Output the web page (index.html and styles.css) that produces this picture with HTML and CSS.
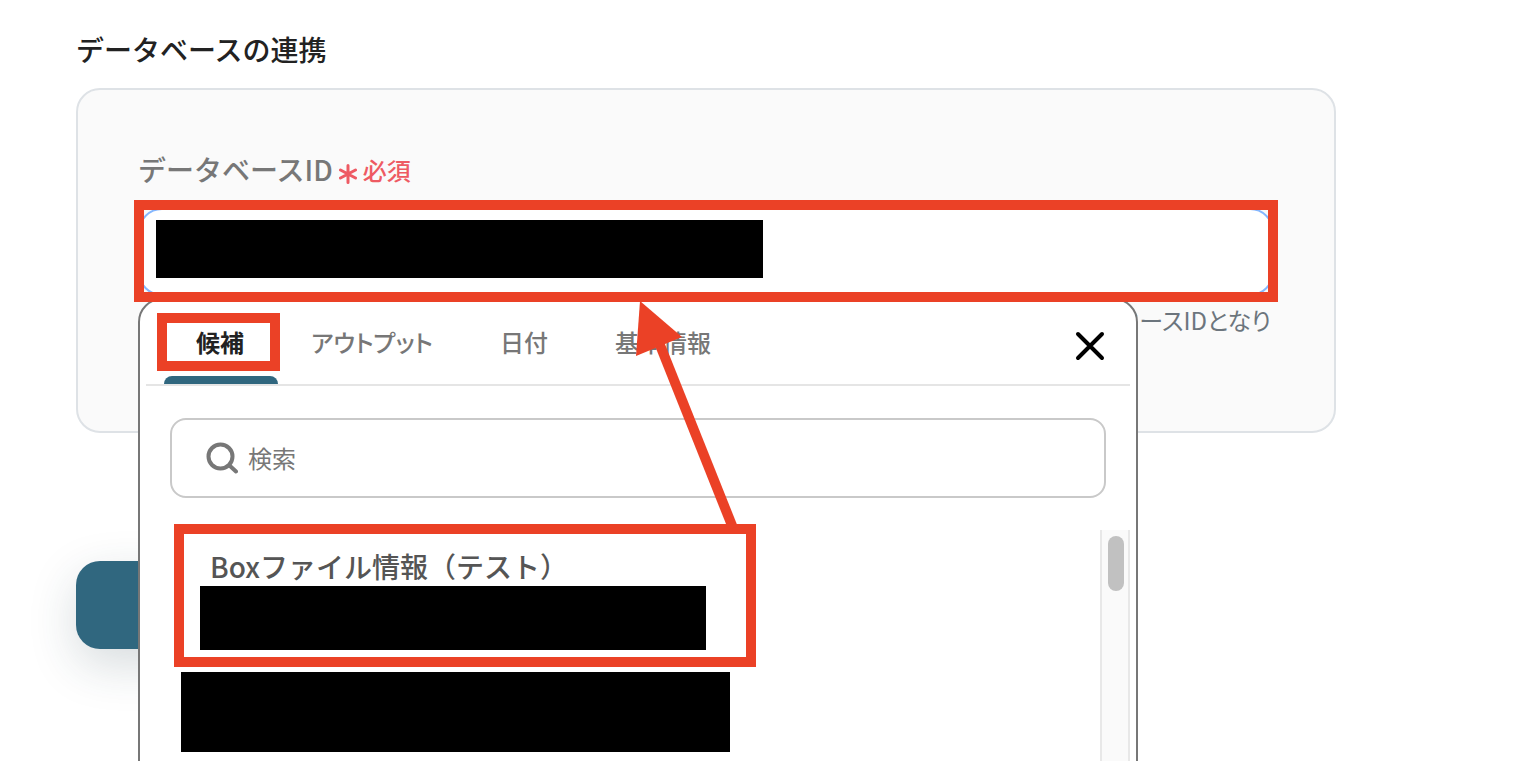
FILE: index.html
```html
<!DOCTYPE html>
<html lang="ja">
<head>
<meta charset="utf-8">
<meta name="viewport" content="width=device-width, initial-scale=1">
<title>データベースの連携</title>
<link rel="stylesheet" href="styles.css">
</head>
<body>
<main class="page">
  <h1 class="page-title">データベースの連携</h1>
  <section class="card">
    <label class="label" for="database-id">データベースID
      <span class="required">
        <svg class="required-mark" viewBox="0 0 18 20" aria-hidden="true"><path d="M9 1.500v17M1.500 6l15 8M16.500 6l-15 8"/></svg>必須
      </span>
    </label>
    <div class="field">
      <input class="text-input" id="database-id" type="text">
      <span class="redaction redaction-value"></span>
      <span class="frame frame-field"></span>

      <div class="popover">
        <div class="tabs">
          <button class="tab tab-active" type="button">候補<span class="frame frame-tab"></span></button>
          <button class="tab" type="button">アウトプット</button>
          <button class="tab" type="button">日付</button>
          <button class="tab" type="button">基本情報</button>
          <button class="close" type="button" aria-label="閉じる">
            <svg viewBox="0 0 32 32" aria-hidden="true"><path d="M4 4l24 24M28 4L4 28"/></svg>
          </button>
        </div>
        <div class="search">
          <svg class="search-icon" viewBox="0 0 32 32" aria-hidden="true"><circle cx="14.500" cy="14.500" r="12"/><path d="M23.500 23.500l6.500 6"/></svg>
          <input class="search-input" type="search" placeholder="検索" aria-label="検索">
        </div>
        <div class="results">
          <ul class="items">
            <li class="item item-picked">
              <span class="item-name">Boxファイル情報（テスト）</span>
              <span class="redaction redaction-first"></span>
              <span class="frame frame-item"></span>
            </li>
            <li class="item"><span class="redaction redaction-second"></span></li>
          </ul>
          <div class="track"><div class="thumb"></div></div>
        </div>
        <svg class="arrow" viewBox="0 0 120 230" aria-hidden="true">
          <path class="arrow-shaft" d="M37 40L112 228"/>
          <path class="arrow-head" d="M19 1L61 37L15 56Z"/>
        </svg>
      </div>
    </div>
    <p class="helper">データベースIDとなり</p>
  </section>
  <button class="submit" type="button" aria-label="送信"></button>
</main>
</body>
</html>
```

FILE: styles.css
```css
* {
  box-sizing: border-box;
}

body {
  margin: 0;
  height: 100vh;
  overflow: hidden;
  background: #fff;
  color: #222;
  font-family: "Noto Sans CJK JP", sans-serif;
}

button,
input {
  font: inherit;
}

.page {
  max-width: 1412px;
  margin-right: 126px;
  padding: 28px 76px 0;
}

.page-title {
  margin: 0 0 18px;
  font-size: 28px;
  font-weight: 500;
  line-height: 42px;
}

.card {
  padding: 58px 60px 60px;
  border: 2px solid #dee2e6;
  border-radius: 24px;
  background: #fafafa;
}

.label {
  display: flex;
  align-items: center;
  gap: 6px;
  margin-bottom: 18px;
  color: #777;
  font-size: 28px;
  font-weight: 500;
  line-height: 42px;
}

.required {
  display: flex;
  align-items: center;
  gap: 6px;
  padding-top: 2px;
  color: #ee5a63;
  font-size: 24px;
  line-height: 40px;
}

.required-mark {
  width: 18px;
  height: 20px;
  margin-top: 8px;
  fill: none;
  stroke: currentColor;
  stroke-width: 3;
  stroke-linecap: round;
}

.field {
  position: relative;
}

.text-input {
  display: block;
  width: 100%;
  height: 88px;
  padding: 0 24px;
  border: 2px solid #86b7fe;
  border-radius: 24px;
  background: #fff;
}

.redaction {
  display: block;
  background: #000;
}

.redaction-value {
  position: absolute;
  top: 12px;
  left: 18px;
  width: 607px;
  height: 58px;
}

.frame {
  position: absolute;
  border: 10px solid #eb4126;
  pointer-events: none;
}

.frame-field {
  inset: -8px -4px -6px;
  z-index: 3;
}

.helper {
  min-height: 68px;
  margin: 7px 0 0;
  padding-right: 3px;
  color: #6c757d;
  font-size: 24px;
  line-height: 34px;
  text-align: right;
  font-feature-settings: "palt";
}

.popover {
  position: absolute;
  top: 90px;
  left: 0;
  z-index: 2;
  width: 1000px;
  max-width: 100%;
  padding: 0 6px;
  border: 2px solid #777;
  border-radius: 24px;
  background: #fff;
}

.tabs {
  display: flex;
  gap: 3px;
  height: 86px;
  padding: 0 24px 0 18px;
  border-bottom: 2px solid #e5e5e5;
}

.tab {
  position: relative;
  padding: 0 32px 2px;
  border: 0;
  background: none;
  color: #777;
  font-size: 24px;
  font-weight: 500;
  font-feature-settings: "palt";
}

.tab-active {
  color: #222;
  font-weight: 700;
}

.tab-active::after {
  content: "";
  position: absolute;
  right: -2px;
  bottom: 0;
  left: 0;
  height: 8px;
  border-radius: 8px 8px 0 0;
  background: #30677f;
}

.frame-tab {
  inset: 13px -4px 13px -7px;
}

.close {
  align-self: center;
  width: 32px;
  height: 32px;
  margin: 8px 0 0 auto;
  padding: 0;
  border: 0;
  background: none;
}

.close svg {
  display: block;
  fill: none;
  stroke: #000;
  stroke-width: 4;
  stroke-linecap: round;
}

.search {
  display: flex;
  align-items: center;
  gap: 10px;
  height: 80px;
  margin: 32px 24px;
  padding: 0 34px;
  border: 2px solid #c9c9c9;
  border-radius: 16px;
}

.search-icon {
  width: 32px;
  height: 32px;
  fill: none;
  stroke: #777;
  stroke-width: 4;
  stroke-linecap: round;
}

.search-input {
  flex: 1;
  padding: 0 0 2px;
  border: 0;
  outline: 0;
  background: none;
  font-size: 24px;
}

.search-input::placeholder {
  color: #777;
  opacity: 1;
}

.results {
  display: flex;
  height: 400px;
}

.items {
  flex: 1;
  margin: 0;
  padding: 0 28px;
  list-style: none;
}

.item-picked {
  position: relative;
  padding: 16px 26px 22px;
}

.item-name {
  display: block;
  padding-left: 10px;
  color: #555;
  font-size: 28px;
  font-weight: 500;
  line-height: 40px;
}

.redaction-first {
  width: 506px;
  height: 64px;
}

.redaction-second {
  width: 549px;
  height: 80px;
  margin-left: 7px;
}

.frame-item {
  top: -6px;
  left: 0;
  width: 582px;
  height: 143px;
}

.track {
  width: 30px;
  padding: 6px;
  border: solid #e8e8e8;
  border-width: 0 2px;
  background: #fafafa;
}

.thumb {
  width: 16px;
  height: 55px;
  margin: 0 auto;
  border-radius: 8px;
  background: #c1c1c1;
}

.arrow {
  position: absolute;
  top: 0;
  left: 481px;
  width: 120px;
  height: 230px;
  pointer-events: none;
}

.arrow-shaft {
  fill: none;
  stroke: #eb4126;
  stroke-width: 10;
}

.arrow-head {
  fill: #eb4126;
}

.submit {
  display: block;
  width: 400px;
  height: 88px;
  margin-top: 128px;
  border: 0;
  border-radius: 24px;
  background: #30677f;
  box-shadow: 0 16px 48px rgba(32, 60, 72, 0.18);
}
```
